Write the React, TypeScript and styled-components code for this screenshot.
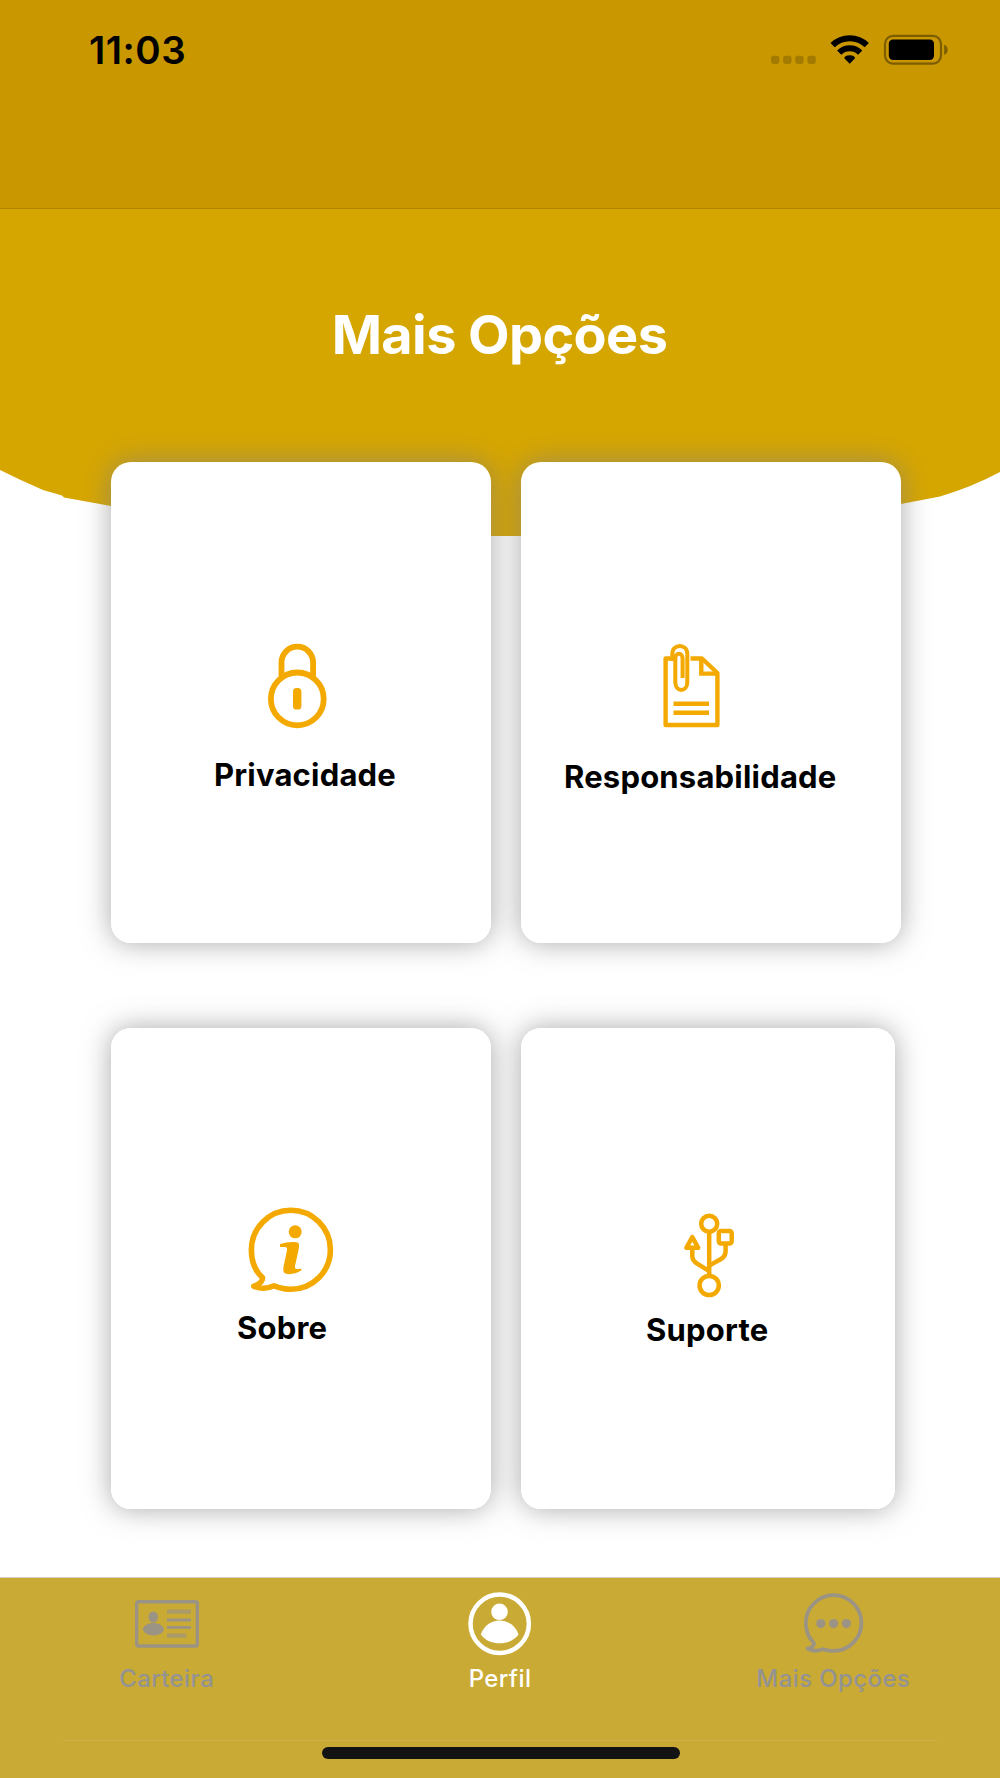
import React from 'react';
import styled, { createGlobalStyle } from 'styled-components';

const GlobalStyle = createGlobalStyle`
  * { box-sizing: border-box; }
  body { margin: 0; background: #fff; }
`;

const amber = '#f3a900';
const muted = '#9b9484';

const Screen = styled.div`
  width: 1000px;
  height: 1778px;
  display: flex;
  flex-direction: column;
  background: #fff;
  overflow: hidden;
  font-family: Inter, 'Liberation Sans', sans-serif;
`;

const NavHeader = styled.header`
  height: 209px;
  flex: none;
  background: #c99700;
  border-bottom: 1px solid #b28500;
`;

const StatusBar = styled.div`
  display: flex;
  justify-content: space-between;
  align-items: flex-start;
  padding: 27px 51px 0 89px;
`;

const Clock = styled.span`
  font-size: 38.5px;
  line-height: 47px;
  font-weight: 600;
  letter-spacing: 0.5px;
  color: #000;
`;

const StatusIcons = styled.div`
  display: flex;
  padding-top: 7px;
`;

const Glyph = styled.svg`
  display: block;
  flex: none;
`;

const Content = styled.main`
  flex: none;
  height: 1368px;
  display: grid;
  grid-template-rows: 327px 1041px;
`;

const HeroShape = styled.svg`
  grid-area: 1 / 1;
  display: block;
`;

const Title = styled.h1`
  grid-area: 1 / 1;
  z-index: 1;
  margin: 92px 0 0;
  text-align: center;
  color: #fff;
  font-size: 54px;
  line-height: 67px;
  font-weight: 700;
  letter-spacing: -0.6px;
  text-indent: -1px;
  height: 66px;
`;

const Cards = styled.section`
  grid-area: 1 / 1 / 3 / 2;
  z-index: 2;
  padding: 253px 0 0 111px;
  display: flex;
  flex-direction: column;
  gap: 85px;
`;

const CardRow = styled.div`
  display: flex;
  gap: 30px;
`;

/* The shadow sits on its own layer so that it never falls on a neighbouring card. */
const Card = styled.article<{ $w?: number; $top: number }>`
  position: relative;
  width: ${(p) => p.$w ?? 380}px;
  height: 481px;
  padding-top: ${(p) => p.$top}px;
  background: #fff;
  border-radius: 20px;

  &::before {
    content: '';
    position: absolute;
    inset: 0;
    z-index: -1;
    border-radius: 20px;
    box-shadow: 0 0 28px rgba(128, 128, 128, 0.68);
  }
`;

const CardIcon = styled.svg<{ $left: number }>`
  display: block;
  margin-left: ${(p) => p.$left}px;
`;

const CardLabel = styled.h2<{ $left: number; $gap: number }>`
  margin: ${(p) => p.$gap}px 0 0 ${(p) => p.$left}px;
  font-size: 31px;
  line-height: 37px;
  font-weight: 700;
  letter-spacing: 0.2px;
  color: #000;
  white-space: nowrap;
`;

const TabBar = styled.nav`
  flex: none;
  height: 201px;
  border-top: 1px solid #d5cfbd;
  background: #c9aa34;
  display: flex;
  flex-direction: column;
  align-items: center;
`;

const Tabs = styled.div`
  width: 1000px;
  height: 162px;
  display: grid;
  grid-template-columns: repeat(3, 1fr);
`;

const Tab = styled.a<{ $active?: boolean }>`
  display: flex;
  flex-direction: column;
  align-items: center;
  padding-top: 13px;
  color: ${(p) => (p.$active ? '#fff' : '#939393')};
  font-size: 24px;
  line-height: 30px;
  font-weight: 500;
  letter-spacing: 0.4px;
  gap: 7px;
`;

const Divider = styled.div`
  width: 874px;
  height: 1px;
  background: #ceb04a;
`;

const HomeIndicator = styled.div`
  width: 358px;
  height: 12px;
  margin: 6px 0 0 2px;
  border-radius: 6px;
  background: #131313;
`;

function Signal() {
  return (
    <Glyph width="60" height="32" viewBox="770 34 60 32" fill="#a37b00">
      {[771, 783.1, 795.2, 807.4].map((x) => (
        <rect key={x} x={x} y="55.7" width="8.4" height="8.2" rx="2.4" />
      ))}
    </Glyph>
  );
}

function Wifi() {
  return (
    <Glyph width="53" height="32" viewBox="830 34 53 32" fill="none" stroke="#000" strokeWidth="6">
      <path d="M832.6 45.1A24.5 24.5 0 0 1 866.8 45.1" />
      <path d="M839.2 52.6A15 15 0 0 1 860.2 52.6" />
      <path d="M849.7 63.8L844.3 58.2Q844.8 55.2 849.7 55.2Q854.6 55.2 855.1 58.2Z" fill="#000" stroke="none" />
    </Glyph>
  );
}

function Battery() {
  return (
    <Glyph width="66" height="32" viewBox="883 34 66 32">
      <rect x="885" y="35.9" width="56" height="27.7" rx="8" fill="none" stroke="#7c5d00" strokeWidth="2.2" />
      <rect x="888.8" y="39.4" width="45.2" height="20.6" rx="4.2" fill="#000" />
      <path d="M944.2 44.7Q947.6 46 947.6 49.8Q947.6 53.6 944.2 54.9Z" fill="#7c5d00" />
    </Glyph>
  );
}

function LockIcon() {
  return (
    <CardIcon $left={156} width="61" height="87" viewBox="267 642 61 87" fill="none" stroke={amber} strokeWidth="5.8">
      <circle cx="297.3" cy="698.9" r="26.4" />
      <path d="M281.5 677V662.5A15.8 15.8 0 0 1 313.1 662.5V677" />
      <rect x="293" y="688" width="8.4" height="21.5" rx="3.6" fill={amber} stroke="none" />
    </CardIcon>
  );
}

function DocumentIcon() {
  return (
    <CardIcon $left={141} width="60" height="87" viewBox="662 642 60 87" fill="none" stroke={amber} strokeWidth="4.4">
      <path d="M672 658.5H665.6V725H717.4V673L702 658.5H690.5" strokeLinejoin="round" />
      <path d="M701.3 658.5V673.6H717.4" />
      <path d="M673.5 703.7H709M673.5 712.8H709" />
      <path
        strokeWidth="4"
        d="M672.3 661V654C672.3 643.2 687.3 643.2 687.3 654V682C687.3 692.5 675.3 692.5 675.3 682V659C675.3 652 682.6 652 682.6 659V678"
      />
    </CardIcon>
  );
}

function InfoIcon() {
  return (
    <CardIcon $left={136} width="88" height="88" viewBox="247 1206 88 88" fill="none" stroke={amber} strokeWidth="5.6">
      <path
        strokeLinejoin="round"
        d="M262.5 1277.5C255 1271 251.4 1261 251.4 1250A39.5 39.5 0 1 1 290.8 1289.3C284 1289.3 278.5 1287.5 274 1285.8C268 1288.5 260 1289 253.8 1286.2C260.5 1284 262.8 1281.5 262.5 1277.5Z"
      />
      <g fill={amber} stroke="none">
        <circle cx="295.2" cy="1231.8" r="6.5" />
        <path d="M280 1244.2C286 1242.2 292 1241.5 297.5 1242.5C300 1243.5 299 1248 298.2 1251.5L295 1266C294.5 1269 296 1269.6 301.3 1268.4V1270.6C296 1274 289 1275 285.5 1273.5C282.8 1272.3 283 1269.5 283.7 1266L287 1250C287.5 1246.5 286 1246.8 280 1247Z" />
      </g>
    </CardIcon>
  );
}

function UsbIcon() {
  return (
    <CardIcon $left={162} width="53" height="87" viewBox="683 1212 53 87" fill="none" stroke={amber} strokeWidth="4.5">
      <circle cx="709.2" cy="1223.8" r="8" />
      <circle cx="709.2" cy="1285.5" r="9.6" />
      <path d="M709.2 1232V1276" />
      <rect x="718.8" y="1230.9" width="12.9" height="12.6" rx="2.2" />
      <path d="M692.3 1237L686.4 1247.8H698.2Z" strokeLinejoin="round" />
      <path d="M692.3 1248V1256.5Q692.5 1260.3 696 1262.8L708.8 1270.8M725.6 1243.5V1251.5Q725.3 1256.5 721 1259L709.2 1265.6" />
    </CardIcon>
  );
}

function WalletIcon() {
  return (
    <Glyph width="66" height="66" viewBox="134 1591 66 66" fill={muted}>
      <rect x="136.7" y="1601.8" width="60.6" height="44.2" rx="2" fill="none" stroke={muted} strokeWidth="3.4" />
      <ellipse cx="153.3" cy="1617" rx="4.8" ry="5.5" />
      <path d="M142.7 1629C145.5 1621 161 1621 164 1629C162.5 1637.5 144.5 1637.5 142.7 1629Z" />
      <path d="M167 1609.5h24v4.2h-24zM167 1633.6h19.3v4.2h-19.3z" opacity=".65" />
      <path d="M167 1618.6h24v2.8h-24zM167 1626h24v2.8h-24z" />
    </Glyph>
  );
}

function ProfileIcon() {
  return (
    <Glyph width="66" height="66" viewBox="467 1591 66 66" fill="#fff">
      <circle cx="499.7" cy="1623.7" r="29.2" fill="none" stroke="#fff" strokeWidth="4.5" />
      <circle cx="499.5" cy="1611.8" r="8.3" />
      <path d="M480.8 1634.5C487 1615.8 512 1615.8 518.6 1634.5C510 1646.3 489 1646.3 480.8 1634.5Z" />
    </Glyph>
  );
}

function ChatIcon() {
  return (
    <Glyph width="66" height="66" viewBox="800 1591 66 66" fill="none" stroke={muted} strokeWidth="3.8">
      <path
        strokeLinejoin="round"
        d="M814 1643C809 1638 805.8 1631 805.8 1623.2A27.8 27.8 0 1 1 833.6 1650.8C829 1650.8 826 1649.9 822.8 1649.2C818 1651 811.5 1651 807.5 1648.7C812.5 1647.5 814.3 1646 814 1643Z"
      />
      <g fill={muted} stroke="none">
        <circle cx="820.8" cy="1623.6" r="4.6" />
        <circle cx="833.6" cy="1623.6" r="4.6" />
        <circle cx="846.4" cy="1623.6" r="4.6" />
      </g>
    </Glyph>
  );
}

export default function App() {
  return (
    <Screen>
      <GlobalStyle />
      <NavHeader>
        <StatusBar>
          <Clock>11:03</Clock>
          <StatusIcons>
            <Signal />
            <Wifi />
            <Battery />
          </StatusIcons>
        </StatusBar>
      </NavHeader>
      <Content>
        <HeroShape width="1000" height="327" viewBox="0 209 1000 327">
          <path
            fill="#d6a600"
            d="M0 209H1000V472Q972 487 940 496.5L901 504Q860 512 830 536H180Q150 512 111 506L64 497.5L62 495.5L43 490Q20 480 0 470Z"
          />
        </HeroShape>
        <Title>Mais Opções</Title>
        <Cards>
          <CardRow>
            <Card $top={180}>
              <LockIcon />
              <CardLabel $left={103} $gap={27}>Privacidade</CardLabel>
            </Card>
            <Card $top={180}>
              <DocumentIcon />
              <CardLabel $left={43} $gap={29}>Responsabilidade</CardLabel>
            </Card>
          </CardRow>
          <CardRow>
            <Card $top={178}>
              <InfoIcon />
              <CardLabel $left={126} $gap={15}>Sobre</CardLabel>
            </Card>
            <Card $w={374} $top={184}>
              <UsbIcon />
              <CardLabel $left={125} $gap={12}>Suporte</CardLabel>
            </Card>
          </CardRow>
        </Cards>
      </Content>
      <TabBar>
        <Tabs>
          <Tab>
            <WalletIcon />
            Carteira
          </Tab>
          <Tab $active>
            <ProfileIcon />
            Perfil
          </Tab>
          <Tab>
            <ChatIcon />
            Mais Opções
          </Tab>
        </Tabs>
        <Divider />
        <HomeIndicator />
      </TabBar>
    </Screen>
  );
}
